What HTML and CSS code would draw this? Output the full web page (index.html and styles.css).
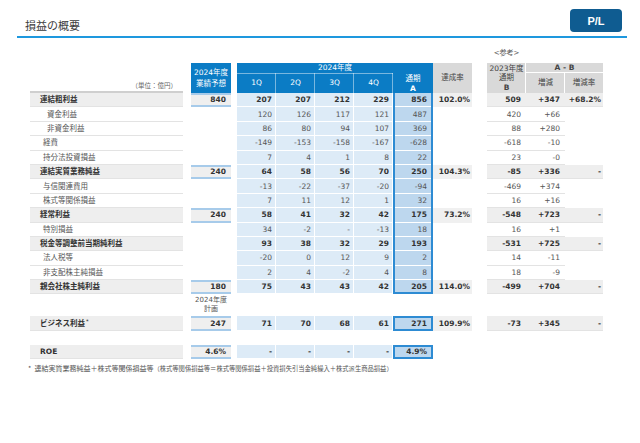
FILE: index.html
```html
<!DOCTYPE html>
<html lang="ja">
<head>
<meta charset="utf-8">
<title>損益の概要</title>
<link rel="stylesheet" href="styles.css">
</head>
<body>
<header class="topbar">
  <h1 class="title">損益の概要</h1>
  <div class="badge">P/L</div>
</header>

<table class="pl">
  <colgroup>
    <col class="c-label"><col class="c-gap1"><col class="c-fc"><col class="c-gap2">
    <col class="c-q"><col class="c-q"><col class="c-q"><col class="c-q">
    <col class="c-a"><col class="c-rt"><col class="c-gap3">
    <col class="c-b"><col class="c-d"><col class="c-dp">
  </colgroup>
  <tbody>
    <tr class="ref-row">
      <td colspan="11"></td>
      <td class="ref-note">&lt;参考&gt;</td>
      <td colspan="2"></td>
    </tr>
    <tr class="h1">
      <th class="unit" rowspan="2">（単位：億円）</th>
      <th></th>
      <th class="hb fch" rowspan="2">2024年度<br>業績予想</th>
      <th></th>
      <th class="hb" colspan="5">2024年度</th>
      <th class="hg" rowspan="2">達成率</th>
      <th></th>
      <th class="hg hbB" rowspan="2">2023年度<br>通期<br><b>B</b></th>
      <th class="hg hab" colspan="2"><b>A - B</b></th>
    </tr>
    <tr class="h2">
      <th></th><th></th>
      <th class="hb hq">1Q</th><th class="hb hq">2Q</th><th class="hb hq">3Q</th><th class="hb hq">4Q</th>
      <th class="hb hqa">通期<br><b>A</b></th>
      <th></th>
      <th class="hg hd">増減</th><th class="hg hdp">増減率</th>
    </tr>

    <tr class="row bold">
      <td class="lb">連結粗利益</td><td></td><td class="fv">840</td><td></td>
      <td class="q">207</td><td class="q">207</td><td class="q">212</td><td class="q">229</td>
      <td class="a">856</td><td class="rt">102.0%</td><td></td>
      <td class="rf">509</td><td class="rf">+347</td><td class="rf dp">+68.2%</td>
    </tr>
    <tr class="row">
      <td class="lb l2">資金利益</td><td></td><td></td><td></td>
      <td class="q">120</td><td class="q">126</td><td class="q">117</td><td class="q">121</td>
      <td class="a">487</td><td></td><td></td>
      <td class="rf">420</td><td class="rf">+66</td><td></td>
    </tr>
    <tr class="row">
      <td class="lb l2">非資金利益</td><td></td><td></td><td></td>
      <td class="q">86</td><td class="q">80</td><td class="q">94</td><td class="q">107</td>
      <td class="a">369</td><td></td><td></td>
      <td class="rf">88</td><td class="rf">+280</td><td></td>
    </tr>
    <tr class="row">
      <td class="lb l1">経費</td><td></td><td></td><td></td>
      <td class="q">-149</td><td class="q">-153</td><td class="q">-158</td><td class="q">-167</td>
      <td class="a">-628</td><td></td><td></td>
      <td class="rf">-618</td><td class="rf">-10</td><td></td>
    </tr>
    <tr class="row">
      <td class="lb l1">持分法投資損益</td><td></td><td></td><td></td>
      <td class="q">7</td><td class="q">4</td><td class="q">1</td><td class="q">8</td>
      <td class="a">22</td><td></td><td></td>
      <td class="rf">23</td><td class="rf">-0</td><td></td>
    </tr>
    <tr class="row bold">
      <td class="lb">連結実質業務純益</td><td></td><td class="fv">240</td><td></td>
      <td class="q">64</td><td class="q">58</td><td class="q">56</td><td class="q">70</td>
      <td class="a">250</td><td class="rt">104.3%</td><td></td>
      <td class="rf">-85</td><td class="rf">+336</td><td class="rf dp">-</td>
    </tr>
    <tr class="row">
      <td class="lb l1">与信関連費用</td><td></td><td></td><td></td>
      <td class="q">-13</td><td class="q">-22</td><td class="q">-37</td><td class="q">-20</td>
      <td class="a">-94</td><td></td><td></td>
      <td class="rf">-469</td><td class="rf">+374</td><td></td>
    </tr>
    <tr class="row">
      <td class="lb l1">株式等関係損益</td><td></td><td></td><td></td>
      <td class="q">7</td><td class="q">11</td><td class="q">12</td><td class="q">1</td>
      <td class="a">32</td><td></td><td></td>
      <td class="rf">16</td><td class="rf">+16</td><td></td>
    </tr>
    <tr class="row bold">
      <td class="lb">経常利益</td><td></td><td class="fv">240</td><td></td>
      <td class="q">58</td><td class="q">41</td><td class="q">32</td><td class="q">42</td>
      <td class="a">175</td><td class="rt">73.2%</td><td></td>
      <td class="rf">-548</td><td class="rf">+723</td><td class="rf dp">-</td>
    </tr>
    <tr class="row">
      <td class="lb l1">特別損益</td><td></td><td></td><td></td>
      <td class="q">34</td><td class="q">-2</td><td class="q">-</td><td class="q">-13</td>
      <td class="a">18</td><td></td><td></td>
      <td class="rf">16</td><td class="rf">+1</td><td></td>
    </tr>
    <tr class="row bold">
      <td class="lb">税金等調整前当期純利益</td><td></td><td></td><td></td>
      <td class="q">93</td><td class="q">38</td><td class="q">32</td><td class="q">29</td>
      <td class="a">193</td><td></td><td></td>
      <td class="rf">-531</td><td class="rf">+725</td><td class="rf dp">-</td>
    </tr>
    <tr class="row">
      <td class="lb l1">法人税等</td><td></td><td></td><td></td>
      <td class="q">-20</td><td class="q">0</td><td class="q">12</td><td class="q">9</td>
      <td class="a">2</td><td></td><td></td>
      <td class="rf">14</td><td class="rf">-11</td><td></td>
    </tr>
    <tr class="row">
      <td class="lb l1">非支配株主純損益</td><td></td><td></td><td></td>
      <td class="q">2</td><td class="q">4</td><td class="q">-2</td><td class="q">4</td>
      <td class="a">8</td><td></td><td></td>
      <td class="rf">18</td><td class="rf">-9</td><td></td>
    </tr>
    <tr class="row bold">
      <td class="lb">親会社株主純利益</td><td></td><td class="fv">180</td><td></td>
      <td class="q">75</td><td class="q">43</td><td class="q">43</td><td class="q">42</td>
      <td class="a a-last">205</td><td class="rt">114.0%</td><td></td>
      <td class="rf">-499</td><td class="rf">+704</td><td class="rf dp">-</td>
    </tr>

    <tr class="plan-row">
      <td></td><td></td>
      <td class="plan">2024年度<br>計画</td>
      <td colspan="11"></td>
    </tr>
    <tr class="row bold">
      <td class="lb">ビジネス利益<sup class="mark">*</sup></td><td></td><td class="fv">247</td><td></td>
      <td class="q">71</td><td class="q">70</td><td class="q">68</td><td class="q">61</td>
      <td class="a a-box">271</td><td class="rt">109.9%</td><td></td>
      <td class="rf">-73</td><td class="rf">+345</td><td class="rf dp">-</td>
    </tr>
    <tr class="gap-row"><td colspan="14"></td></tr>
    <tr class="row bold">
      <td class="lb">ROE</td><td></td><td class="fv">4.6%</td><td></td>
      <td class="q">-</td><td class="q">-</td><td class="q">-</td><td class="q">-</td>
      <td class="a a-box">4.9%</td><td></td><td></td>
      <td></td><td></td><td></td>
    </tr>
  </tbody>
</table>

<p class="footnote">*&nbsp;&nbsp;連結実質業務純益＋株式等関係損益等<span class="fn-small">（株式等関係損益等＝株式等関係損益＋投資損失引当金純繰入＋株式派生商品損益）</span></p>
</body>
</html>
```

FILE: styles.css
```css
* { box-sizing: border-box; }

body {
  margin: 0;
  background: #ffffff;
  font-family: "DejaVu Sans", "Noto Sans CJK JP", sans-serif;
  color: #333333;
}

/* ---------- top bar ---------- */
.topbar {
  display: flex;
  justify-content: space-between;
  align-items: flex-end;
  margin: 0 13px 0 17px;
  padding: 9px 5px 4px 8px;
  border-bottom: 2px solid #1e98de;
}

.title {
  margin: 0;
  font-family: "Noto Sans CJK JP", sans-serif;
  font-weight: normal;
  font-size: 11px;
  line-height: 14px;
  color: #3c3c3c;
}

.badge {
  width: 52px;
  height: 23px;
  display: flex;
  align-items: center;
  justify-content: center;
  background: #0f5c91;
  border-radius: 4px;
  color: #ffffff;
  font-family: "Liberation Sans", sans-serif;
  font-weight: bold;
  font-size: 11px;
}

/* ---------- table ---------- */
.pl {
  margin: 9px 0 0 30px;
  width: 573px;
  table-layout: fixed;
  border-collapse: separate;
  border-spacing: 0;
  font-size: 7.5px;
}

.c-label { width: 153px; }
.c-gap1 { width: 8px; }
.c-fc { width: 40px; }
.c-gap2 { width: 6px; }
.c-q { width: 39px; }
.c-a { width: 40px; }
.c-rt { width: 39px; }
.c-gap3 { width: 15px; }
.c-b { width: 39px; }
.c-d { width: 39px; }
.c-dp { width: 38px; }

.pl td,
.pl th {
  padding: 0;
  line-height: 10px;
  white-space: nowrap;
  vertical-align: middle;
}

.pl th {
  font-weight: normal;
  text-align: center;
}

.pl th b { font-weight: bold; }

/* reference note row */
.ref-row { height: 16px; }
.ref-note {
  text-align: center;
  vertical-align: bottom !important;
  padding-bottom: 5px !important;
  font-size: 7px;
  color: #555555;
}

/* header rows */
.h1 { height: 10px; }
.h2 { height: 19px; }

.unit {
  vertical-align: bottom !important;
  text-align: right !important;
  padding: 0 6px 2px 0 !important;
  font-size: 6.5px;
  color: #666666;
  box-shadow: inset 0 -2px 0 #cfcfcf;
}

.hb {
  background: #0b7cc5;
  color: #ffffff;
}

.fch { line-height: 11px !important; }

.hq {
  box-shadow: inset 0 1px 0 rgba(255, 255, 255, 0.45), inset -1px 0 0 rgba(255, 255, 255, 0.45);
}

.hqa {
  line-height: 9.5px !important;
  padding-top: 1px !important;
}

.hg {
  background: #d9d9d9;
  color: #444444;
}

.hbB {
  line-height: 9.6px !important;
  box-shadow: inset -1px 0 0 #ffffff;
}

.hab { box-shadow: inset 0 -1px 0 #ffffff; }
.hd { box-shadow: inset -1px 0 0 #ffffff; }

/* data rows */
.row { height: 14.4px; }

.row td {
  color: #555555;
}

.row.bold td {
  font-weight: bold;
  color: #333333;
}

.lb {
  padding-left: 10px !important;
  font-family: "DejaVu Sans", "Noto Sans CJK JP", sans-serif;
  box-shadow: inset 0 -1px 0 #e3e3e3;
}

.lb.l1 { padding-left: 13px !important; }
.lb.l2 { padding-left: 17px !important; }

.row.bold .lb { background: #eeeeee; }

.mark {
  font-size: 5px;
  vertical-align: 3px;
  line-height: 0;
  margin-left: 1px;
}

.fv {
  text-align: right;
  padding-right: 5px !important;
  background: #efefef;
  box-shadow: inset 0 2px 0 #a7cbea, inset 0 -2px 0 #a7cbea;
}

.q {
  text-align: right;
  padding-right: 4px !important;
  background: #ddebf7;
  box-shadow: inset -1px -1px 0 #ffffff;
}

.a {
  text-align: right;
  padding-right: 6px !important;
  background: #bdd7ee;
  box-shadow: inset 2px 0 0 #2d8bd3, inset -2px 0 0 #2d8bd3, inset 0 -1px 0 #ffffff;
}

.a-last {
  box-shadow: inset 2px 0 0 #2d8bd3, inset -2px 0 0 #2d8bd3, inset 0 -2px 0 #2d8bd3;
}

.a-box {
  box-shadow: inset 0 0 0 2px #2d8bd3;
}

.rt {
  text-align: right;
  padding-right: 2px !important;
  background: #f0f0f0;
}

.rf {
  text-align: right;
  padding-right: 5px !important;
  box-shadow: inset 0 -1px 0 #e3e3e3;
}

.rf.dp { padding-right: 2px !important; }

.row.bold .rf { background: #eeeeee; }

/* plan label row */
.plan-row { height: 22px; }
.plan {
  text-align: center;
  vertical-align: bottom !important;
  padding-bottom: 2px !important;
  font-size: 7px;
  line-height: 9px !important;
  color: #555555;
}

.gap-row { height: 14px; }

/* footnote */
.footnote {
  margin: 5px 0 0 28px;
  font-family: "Noto Sans CJK JP", sans-serif;
  font-size: 7px;
  line-height: 8px;
  color: #555555;
  white-space: nowrap;
}

.fn-small { font-size: 6.3px; }
```
